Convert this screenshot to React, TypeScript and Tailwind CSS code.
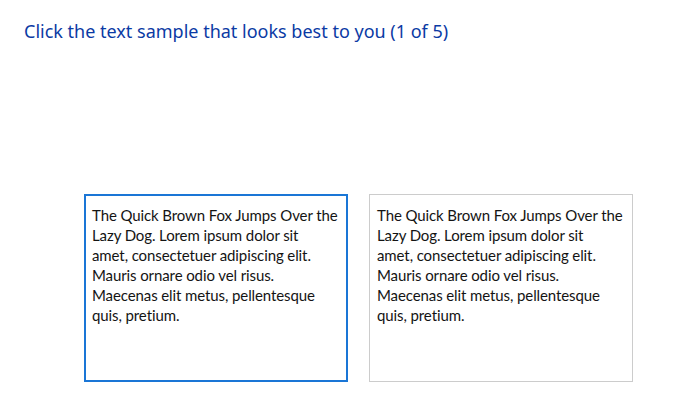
import React, { useState } from 'react';

// Wrapped the way the tuner wraps it, so the lines don't depend on font metrics.
const sampleLines = [
  'The Quick Brown Fox Jumps Over the',
  'Lazy Dog. Lorem ipsum dolor sit',
  'amet, consectetuer adipiscing elit.',
  'Mauris ornare odio vel risus.',
  'Maecenas elit metus, pellentesque',
  'quis, pretium.',
];

function SampleBox(props: { selected: boolean; onSelect: () => void }) {
  return (
    <button
      type="button"
      onClick={props.onSelect}
      className={
        props.selected
          ? 'h-[188px] w-[264px] border-2 border-[#1a76d6] bg-white px-[6px] pt-[9px] text-left align-top'
          : 'h-[188px] w-[264px] border border-[#cccccc] bg-white px-[7px] pt-[10px] text-left align-top'
      }
    >
      <div className="flex h-full flex-col items-start">
        {sampleLines.map((line) => (
          <div
            key={line}
            className="whitespace-nowrap text-[15px] leading-[20px] tracking-[-0.1px] text-[#141414] [font-family:Lato,'Open_Sans',sans-serif]"
          >
            {line}
          </div>
        ))}
      </div>
    </button>
  );
}

export default function App() {
  const [selected, setSelected] = useState(0);

  return (
    <div className="h-[406px] w-[700px] bg-white [font-family:'Noto_Sans',sans-serif]">
      <div className="pl-6 pt-[18px]">
        <h1 className="text-[18px] leading-[26px] text-[#0b3aa4]">
          Click the text sample that looks best to you (1 of 5)
        </h1>
      </div>

      <div className="mt-[150px] flex gap-[21px] pl-[84px]">
        <SampleBox selected={selected === 0} onSelect={() => setSelected(0)} />
        <SampleBox selected={selected === 1} onSelect={() => setSelected(1)} />
      </div>
    </div>
  );
}
